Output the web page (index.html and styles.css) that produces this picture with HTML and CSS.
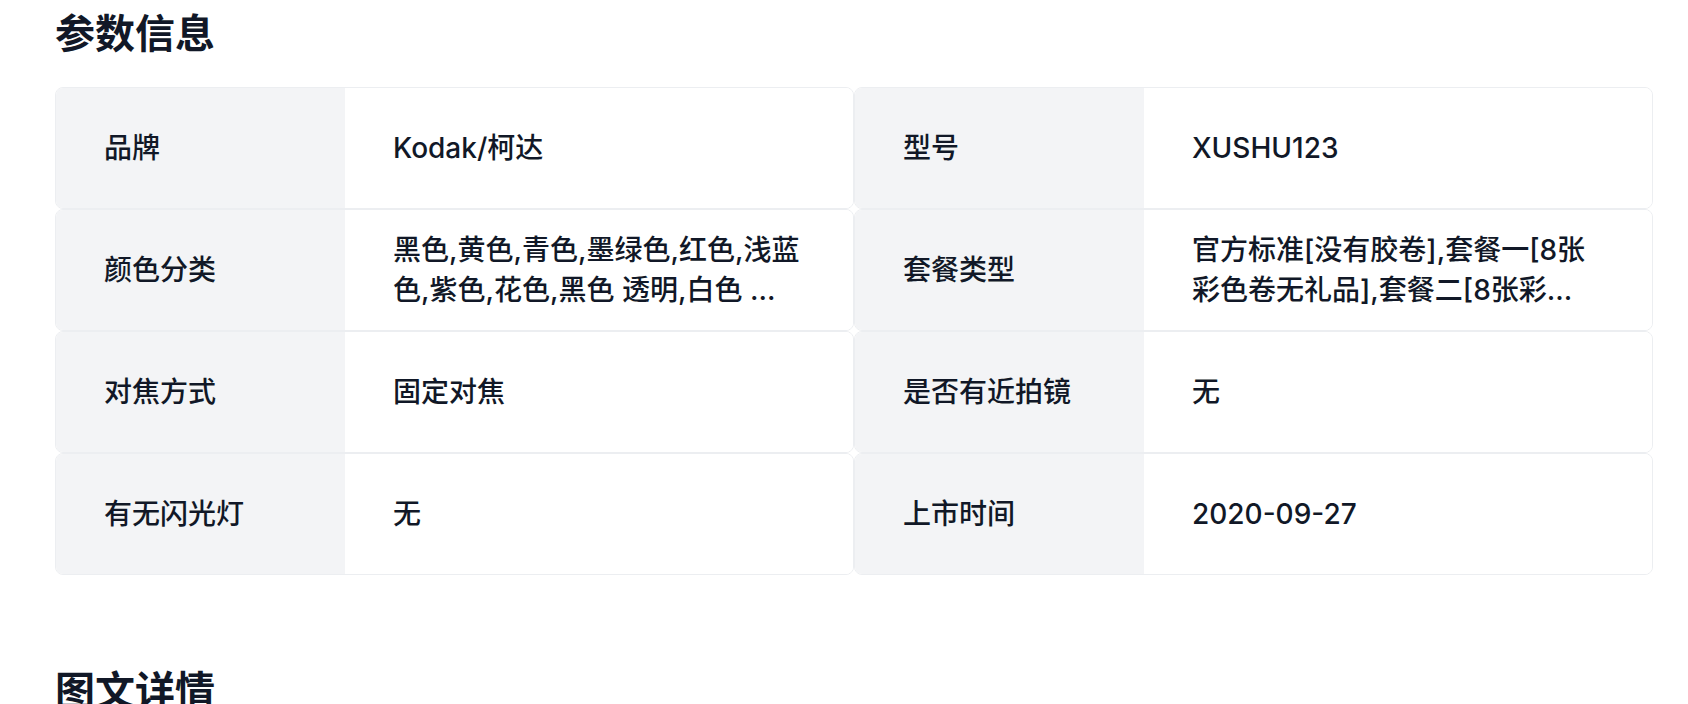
FILE: index.html
```html
<!DOCTYPE html>
<html lang="zh-CN">
<head>
<meta charset="utf-8">
<title>参数信息</title>
<link rel="stylesheet" href="styles.css">
</head>
<body>
<main class="page">
  <section class="section">
    <h2 class="section-title">参数信息</h2>
    <div class="specs">
      <div class="spec">
        <div class="spec-label">品牌</div>
        <div class="spec-value"><span class="clamp">Kodak/柯达</span></div>
      </div>
      <div class="spec">
        <div class="spec-label">型号</div>
        <div class="spec-value"><span class="clamp">XUSHU123</span></div>
      </div>
      <div class="spec">
        <div class="spec-label">颜色分类</div>
        <div class="spec-value"><span class="clamp">黑色,黄色,青色,墨绿色,红色,浅蓝色,紫色,花色,黑色 透明,白色 透明,黄色 透明,蓝色 透明</span></div>
      </div>
      <div class="spec">
        <div class="spec-label">套餐类型</div>
        <div class="spec-value"><span class="clamp">官方标准[没有胶卷],套餐一[8张彩色卷无礼品],套餐二[8张彩色卷+礼品],套餐三[16张彩色卷+礼品]</span></div>
      </div>
      <div class="spec">
        <div class="spec-label">对焦方式</div>
        <div class="spec-value"><span class="clamp">固定对焦</span></div>
      </div>
      <div class="spec">
        <div class="spec-label">是否有近拍镜</div>
        <div class="spec-value"><span class="clamp">无</span></div>
      </div>
      <div class="spec">
        <div class="spec-label">有无闪光灯</div>
        <div class="spec-value"><span class="clamp">无</span></div>
      </div>
      <div class="spec">
        <div class="spec-label">上市时间</div>
        <div class="spec-value"><span class="clamp">2020-09-27</span></div>
      </div>
    </div>
  </section>
  <section class="section section-detail">
    <h2 class="section-title">图文详情</h2>
  </section>
</main>
</body>
</html>
```

FILE: styles.css
```css
html, body {
  margin: 0;
  padding: 0;
  background: #ffffff;
}

body {
  font-family: Inter, "Noto Sans CJK SC", "Noto Sans", sans-serif;
  color: #111827;
}

.page {
  padding: 0 35px 0 55px;
}

.section-title {
  margin: 0;
  font-size: 40px;
  line-height: 56px;
  font-weight: 700;
  color: #111827;
  padding-top: 6px;
}

.specs {
  margin-top: 25px;
  display: grid;
  grid-template-columns: 1fr 1fr;
}

.spec {
  display: grid;
  grid-template-columns: 289px 1fr;
  height: 122px;
  box-sizing: border-box;
  border: 1px solid #eceef1;
  border-radius: 8px;
  overflow: hidden;
}

.spec-label {
  background: #f3f4f6;
  display: flex;
  align-items: center;
  padding: 0 48px;
  font-size: 28px;
  line-height: 40px;
  font-weight: 500;
}

.spec-value {
  background: #ffffff;
  display: flex;
  align-items: center;
  padding: 0 52px 0 48px;
  font-size: 28px;
  line-height: 40px;
  font-weight: 500;
  min-width: 0;
}

.clamp {
  display: -webkit-box;
  -webkit-box-orient: vertical;
  -webkit-line-clamp: 2;
  overflow: hidden;
}

.section-detail {
  margin-top: 82px;
}
```
